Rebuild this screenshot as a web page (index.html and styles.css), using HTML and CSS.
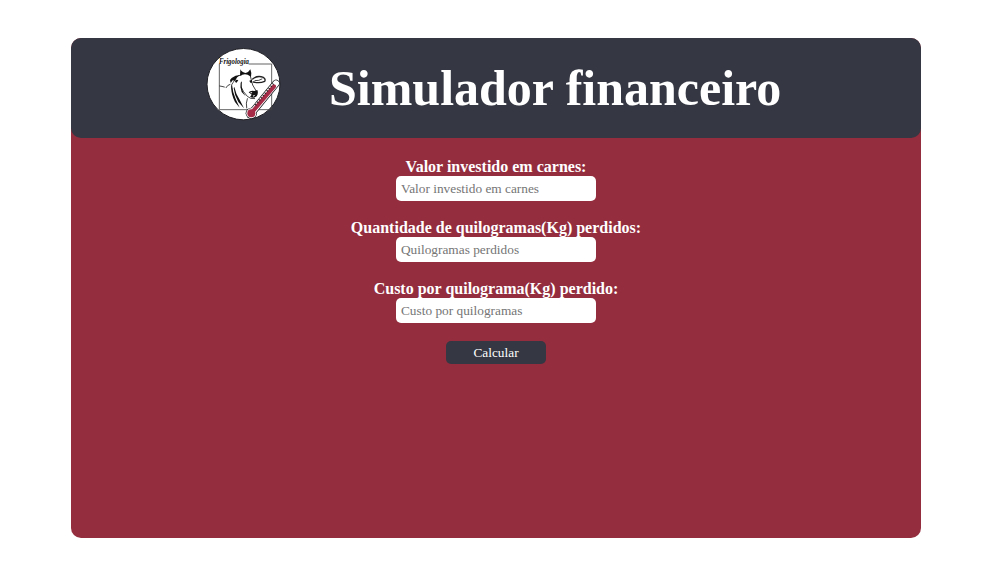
FILE: index.html
```html
<!DOCTYPE html>
<html lang="pt-br">
<head>
<meta charset="utf-8">
<title>Simulador financeiro</title>
<link rel="stylesheet" href="styles.css">
</head>
<body>
<main class="card">
  <header class="header">
    <svg class="logo" viewBox="18 15 225 225" role="img" aria-label="Frigologia">
      <ellipse cx="130.500" cy="126.500" rx="109.500" ry="107" fill="#fff" stroke="#202027" stroke-width="3"/>
      <path d="M146 66H215V203H58V66" fill="none" stroke="#444" stroke-width="2.500"/>
      <text class="logo-text" x="57" y="67" textLength="90" lengthAdjust="spacingAndGlyphs">Frigologia</text>
      <g fill="none" stroke="#222" stroke-width="2.500" stroke-linecap="round" stroke-linejoin="round">
        <path d="M59 132Q66 133 73 135M78 137Q82 129 90 127"/>
        <path d="M125 98Q112 99 106 111L99 122Q91 130 96 143"/>
        <path d="M151 102Q155 118 158 129L168 146"/>
        <path d="M158 111Q172 99 190 106Q198 111 194 118Q179 125 160 120" stroke-width="4"/>
        <path d="M165 116Q177 117 186 111"/>
        <path d="M124 137Q129 149 142 163Q151 172 164 170"/>
        <path d="M142 170Q137 183 140 198"/>
      </g>
      <g fill="#111">
        <path d="M121 82Q126 92 137 93Q146 91 151 82Q156 94 153 104L143 98Q135 95 127 98L120 101Z"/>
        <path d="M95 108Q106 99 120 99L111 106L105 116L98 115L92 123L90 114Z"/>
        <path d="M107 113L115 114L110 122L105 120ZM148 116L156 113L156 122L151 122Z"/>
        <path d="M96 128Q98 151 107 171L119 197L105 180Q93 157 94 136Z"/>
        <path d="M103 135Q108 158 119 173L132 199L115 180Q103 159 101 138Z"/>
        <path d="M126 118Q123 137 130 151L137 163L125 150Q119 136 122 122Z"/>
        <path d="M146 151Q151 145 163 147L172 144Q176 154 170 163Q162 170 150 165L155 158Z"/>
      </g>
      <path d="M151 151L157 150L153 155ZM158 161L166 158L161 164Z" fill="#fff"/>
      <g stroke-linecap="round">
        <path d="M154 214L228 124" stroke="#17171b" stroke-width="22"/>
        <circle cx="154" cy="214" r="17" fill="#17171b"/>
        <path d="M154 214L228 124" stroke="#fff" stroke-width="18"/>
        <circle cx="154" cy="214" r="15" fill="#fff"/>
        <path d="M156 211L222 133" stroke="#a52b46" stroke-width="12"/>
        <circle cx="154" cy="214" r="12" fill="#a52b46"/>
        <path d="M166 189L220 125" stroke="#222" stroke-width="6" stroke-dasharray="3 6" stroke-linecap="butt"/>
      </g>
    </svg>
    <h1 class="title">Simulador financeiro</h1>
  </header>
  <form class="form">
    <div class="field">
      <label class="label" for="valor">Valor investido em carnes:</label>
      <input class="input" id="valor" type="text" placeholder="Valor investido em carnes">
    </div>
    <div class="field">
      <label class="label" for="quantidade">Quantidade de quilogramas(Kg) perdidos:</label>
      <input class="input" id="quantidade" type="text" placeholder="Quilogramas perdidos">
    </div>
    <div class="field">
      <label class="label" for="custo">Custo por quilograma(Kg) perdido:</label>
      <input class="input" id="custo" type="text" placeholder="Custo por quilogramas">
    </div>
    <button class="button" type="button">Calcular</button>
  </form>
</main>
</body>
</html>
```
FILE: styles.css
```css
* {
  box-sizing: border-box;
  font-family: "Liberation Serif", "Times New Roman", serif;
}

body {
  margin: 0;
  padding: 38px 85px 27px 71px;
  background: #fff;
}

.card {
  height: 500px;
  border-radius: 10px;
  background: #942d3e;
  color: #fff;
}

.header {
  display: flex;
  align-items: flex-start;
  gap: 48px;
  height: 100px;
  padding: 9px 0 0 135px;
  border-radius: 10px;
  background: #353742;
}

.logo {
  flex: none;
  width: 75px;
  height: 75px;
}

.logo-text {
  fill: #111;
  font-size: 23px;
  font-style: italic;
  font-weight: bold;
}

.title {
  margin: 12px 0 0;
  font-size: 50px;
  line-height: 58px;
  white-space: nowrap;
}

.form {
  display: flex;
  flex-direction: column;
  align-items: center;
  gap: 18px;
  padding-top: 20px;
}

.field {
  display: flex;
  flex-direction: column;
  align-items: center;
}

.label {
  font-size: 16px;
  font-weight: bold;
  line-height: 18px;
}

.input {
  width: 200px;
  height: 25px;
  padding: 0 5px;
  border: 0;
  border-radius: 5px;
  background: #fff;
  font-size: 13.333px;
}

.input::placeholder {
  color: #757575;
}

.button {
  width: 100px;
  height: 23px;
  padding: 0;
  border: 0;
  border-radius: 5px;
  background: #353742;
  color: #fff;
  font-size: 13.333px;
}
```
